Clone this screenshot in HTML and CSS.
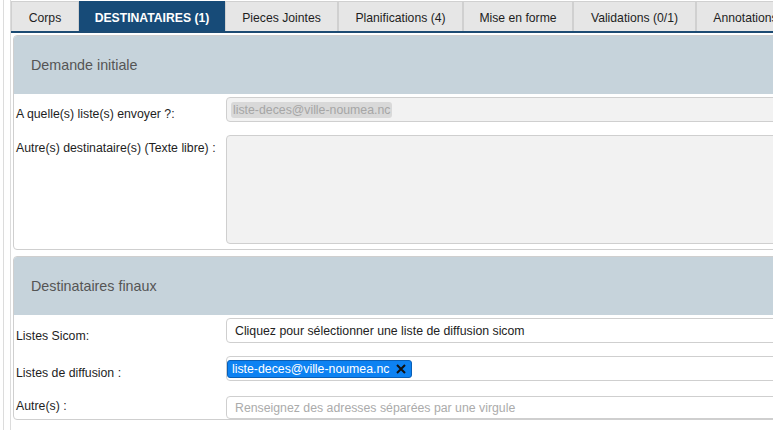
FILE: index.html
```html
<!DOCTYPE html>
<html lang="fr">
<head>
<meta charset="utf-8">
<title>Destinataires</title>
<link rel="stylesheet" href="styles.css">
</head>
<body>
<div class="outer">
  <div class="inner">
    <ul class="tabs">
      <li class="tab tab-corps">Corps</li>
      <li class="tab tab-dest active">DESTINATAIRES (1)</li>
      <li class="tab tab-pj">Pieces Jointes</li>
      <li class="tab tab-plan">Planifications (4)</li>
      <li class="tab tab-mise">Mise en forme</li>
      <li class="tab tab-valid">Validations (0/1)</li>
      <li class="tab tab-annot">Annotations</li>
    </ul>
    <div class="content">
      <section class="panel panel-first">
        <div class="panel-head">Demande initiale</div>
        <div class="row row-first">
          <div class="label">A quelle(s) liste(s) envoyer ?:</div>
          <div class="field disabled"><span class="chip chip-disabled">liste-deces@ville-noumea.nc</span></div>
        </div>
        <div class="row row-area">
          <div class="label label-top">Autre(s) destinataire(s) (Texte libre) :</div>
          <div class="area"></div>
        </div>
      </section>
      <section class="panel panel-second">
        <div class="panel-head">Destinataires finaux</div>
        <div class="row row-sicom">
          <div class="label">Listes Sicom:</div>
          <div class="field"><span class="text">Cliquez pour sélectionner une liste de diffusion sicom</span></div>
        </div>
        <div class="row row-diff">
          <div class="label">Listes de diffusion :</div>
          <div class="field field-chip"><span class="chip chip-blue">liste-deces@ville-noumea.nc<svg class="x" width="12" height="12" viewBox="0 0 12 12"><path d="M2 2 L10 10 M10 2 L2 10" stroke="#111" stroke-width="2" fill="none"/></svg></span></div>
        </div>
        <div class="row row-other">
          <div class="label label-other">Autre(s) :</div>
          <div class="field field-small"><span class="placeholder">Renseignez des adresses séparées par une virgule</span></div>
        </div>
      </section>
    </div>
  </div>
</div>
</body>
</html>
```

FILE: styles.css
```css
html, body {
  margin: 0;
  padding: 0;
  background: #fff;
  overflow: hidden;
}
body {
  font-family: "Liberation Sans", Arial, sans-serif;
  font-size: 12.3px;
  color: #1e1e1e;
  width: 773px;
  height: 430px;
}
.outer {
  margin-left: 3px;
  border-left: 1px solid #dcdcdc;
  height: 430px;
  width: 1100px;
}
.inner {
  margin-left: 6px;
  border-left: 1px solid #dcdcdc;
  height: 430px;
}
.tabs {
  list-style: none;
  margin: 0;
  padding: 1px 0 0 0;
  display: flex;
  height: 30px;
  border-bottom: 2px solid #1c4b73;
  font-size: 12.2px;
}
.tab {
  box-sizing: border-box;
  flex: none;
  height: 30px;
  padding: 2px 0 0 0;
  line-height: 28px;
  text-align: center;
  background: #e6e6e6;
  border: 1px solid #d0d0d0;
  border-bottom: none;
  color: #1e1e1e;
  white-space: nowrap;
}
.tab-corps { width: 68px; }
.tab-dest { width: 146px; }
.tab-pj { width: 113px; }
.tab-plan { width: 125px; }
.tab-mise { width: 110px; }
.tab-valid { width: 123px; }
.tab-annot { width: 99px; }
.tab.active {
  background: #174b78;
  border-color: #174b78;
  color: #fff;
  font-weight: bold;
}
.content {
  padding: 2px 0 0 2px;
}
.panel {
  border: 1px solid #cfcfcf;
  border-radius: 4px;
  overflow: hidden;
}
.panel-second {
  margin-top: 6px;
}
.panel-head {
  background: #c6d3db;
  color: #555;
  font-size: 14.3px;
  height: 58px;
  line-height: 58px;
  padding-left: 17px;
}
.row {
  display: grid;
  grid-template-columns: 212px 1fr;
  align-items: start;
}
.label {
  padding-left: 2px;
  padding-top: 10px;
  line-height: 14px;
}
.label-top {
  padding-top: 6px;
}
.label-other {
  padding-top: 3px;
}
.row-first,
.row-sicom,
.row-diff {
  height: 25px;
}
.row-first {
  margin-top: 3px;
}
.row-area {
  margin-top: 13px;
  padding-bottom: 5px;
}
.row-sicom {
  margin-top: 3px;
}
.row-sicom .label {
  padding-top: 11px;
}
.row-diff {
  margin-top: 13px;
}
.row-other {
  margin-top: 15px;
  height: 23px;
}
.field {
  box-sizing: border-box;
  height: 25px;
  border: 1px solid #cfcfcf;
  border-radius: 4px;
  background: #fff;
  display: flex;
  align-items: center;
  padding-left: 8px;
}
.field.disabled {
  background: #f2f2f2;
  padding-left: 4px;
}
.field-chip {
  padding-left: 0;
}
.field-small {
  height: 23px;
}
.area {
  box-sizing: border-box;
  height: 109px;
  border: 1px solid #cfcfcf;
  border-radius: 4px;
  background: #f2f2f2;
}
.chip {
  display: inline-flex;
  align-items: center;
  height: 16px;
  border-radius: 3px;
  white-space: nowrap;
}
.chip-disabled {
  background: #d9d9d9;
  color: #a6a6a6;
  padding: 0 2px;
}
.chip-blue {
  background: #0d82f2;
  border: 1px solid #0a5fb5;
  color: #fff;
  padding: 0 4px;
}
.x {
  margin-left: 6px;
}
.text {
  color: #222;
}
.placeholder {
  color: #ababab;
}
```
